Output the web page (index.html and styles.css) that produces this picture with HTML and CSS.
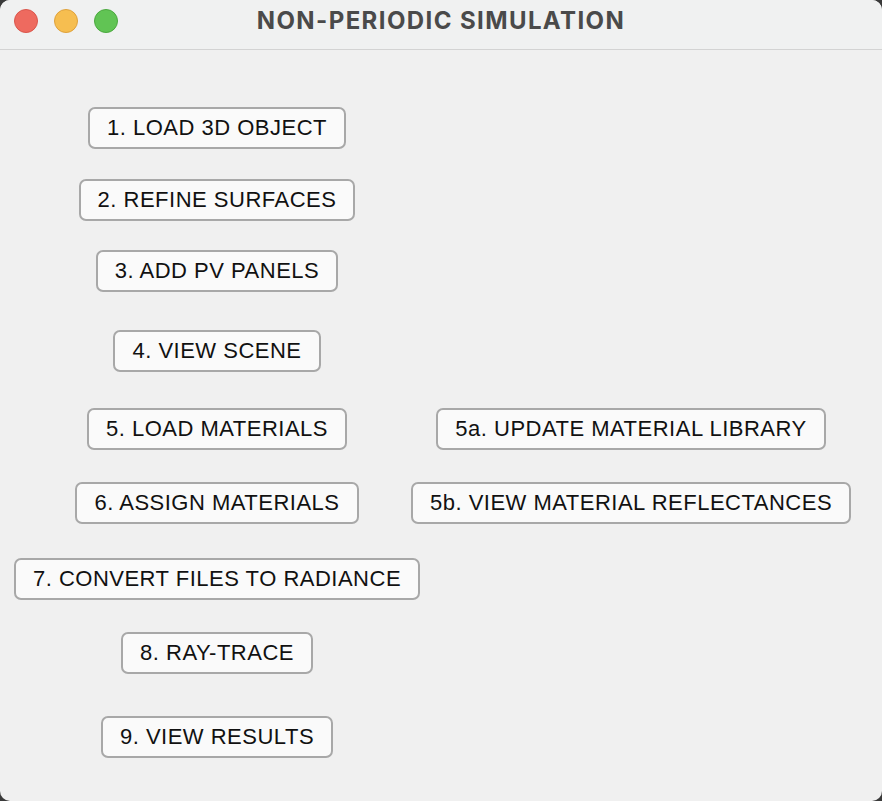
FILE: index.html
```html
<!DOCTYPE html>
<html>
<head>
<meta charset="utf-8">
<link rel="stylesheet" href="styles.css">
</head>
<body>
<div class="window">
  <div class="titlebar">
    <div class="lights">
      <span class="light red"></span>
      <span class="light yellow"></span>
      <span class="light green"></span>
    </div>
    <div class="title">NON-PERIODIC SIMULATION</div>
  </div>
  <div class="content">
    <div class="row r1"><div class="cell"><button class="btn">1. LOAD 3D OBJECT</button></div><div class="cell"></div></div>
    <div class="row r2"><div class="cell"><button class="btn">2. REFINE SURFACES</button></div><div class="cell"></div></div>
    <div class="row r3"><div class="cell"><button class="btn">3. ADD PV PANELS</button></div><div class="cell"></div></div>
    <div class="row r4"><div class="cell"><button class="btn">4. VIEW SCENE</button></div><div class="cell"></div></div>
    <div class="row r5"><div class="cell"><button class="btn">5. LOAD MATERIALS</button></div><div class="cell"><button class="btn">5a. UPDATE MATERIAL LIBRARY</button></div></div>
    <div class="row r6"><div class="cell"><button class="btn">6. ASSIGN MATERIALS</button></div><div class="cell"><button class="btn">5b. VIEW MATERIAL REFLECTANCES</button></div></div>
    <div class="row r7"><div class="cell"><button class="btn">7. CONVERT FILES TO RADIANCE</button></div><div class="cell"></div></div>
    <div class="row r8"><div class="cell"><button class="btn">8. RAY-TRACE</button></div><div class="cell"></div></div>
    <div class="row r9"><div class="cell"><button class="btn">9. VIEW RESULTS</button></div><div class="cell"></div></div>
  </div>
</div>
</body>
</html>
```
FILE: styles.css
```css
html, body {
  margin: 0;
  padding: 0;
  background: #3a3a3a;
}
.window {
  width: 882px;
  height: 801px;
  background: #f0f0f0;
  border-radius: 10px;
  overflow: hidden;
  display: flex;
  flex-direction: column;
}
.titlebar {
  height: 50px;
  flex: 0 0 50px;
  background: #f0f1f1;
  border-bottom: 1px solid #d3d3d3;
  position: relative;
  display: flex;
  align-items: center;
  justify-content: center;
  box-sizing: border-box;
}
.lights {
  position: absolute;
  left: 14px;
  top: 9px;
  display: flex;
  gap: 16px;
}
.light {
  width: 24px;
  height: 24px;
  border-radius: 50%;
  box-sizing: border-box;
}
.red { background: #ee6a5f; border: 1px solid #d9564c; }
.yellow { background: #f6be50; border: 1px solid #dea13c; }
.green { background: #61c454; border: 1px solid #4ba83f; }
.title {
  font-family: Inter, "Open Sans", "Liberation Sans", sans-serif;
  font-weight: 700;
  font-size: 24px;
  letter-spacing: 1.4px;
  color: #4a4a4a;
  margin-top: -8px;
}
.content {
  flex: 1;
  display: flex;
  flex-direction: column;
  padding-top: 57px;
}
.row {
  display: grid;
  grid-template-columns: 434px 394px;
  align-items: start;
}
.r1 { height: 72px; }
.r2 { height: 71px; }
.r3 { height: 80px; }
.r4 { height: 78px; }
.r5 { height: 74px; }
.r6 { height: 76px; }
.r7 { height: 74px; }
.r8 { height: 84px; }
.r9 { height: 42px; }
.cell {
  display: flex;
  justify-content: center;
}
.btn {
  height: 42px;
  padding: 0 17px;
  background: #fafafa;
  border: 2px solid #a8a8a8;
  border-radius: 7px;
  font-family: "Liberation Sans", Arial, sans-serif;
  font-size: 22px;
  letter-spacing: 0.5px;
  color: #111;
  white-space: nowrap;
  box-sizing: border-box;
}
```
